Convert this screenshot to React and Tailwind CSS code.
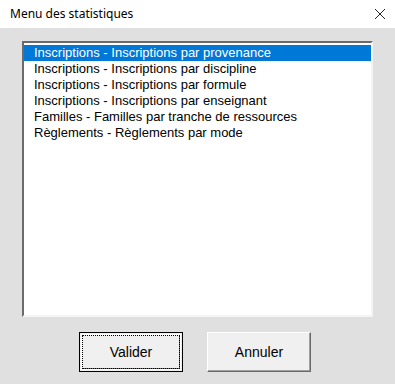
import React from 'react';

const items = [
  "Inscriptions - Inscriptions par provenance",
  "Inscriptions - Inscriptions par discipline",
  "Inscriptions - Inscriptions par formule",
  "Inscriptions - Inscriptions par enseignant",
  "Familles - Familles par tranche de ressources",
  "Règlements - Règlements par mode",
];

export default function App() {
  return (
    <div className="w-[395px] h-[384px] flex flex-col bg-[#e0e0e0] overflow-hidden">
      {/* Title bar */}
      <div className="h-[28px] bg-white flex items-center justify-between pl-[10px] pr-[8px]">
        <span className="text-[12px] text-black font-['Noto_Sans',sans-serif]">Menu des statistiques</span>
        <svg width="12" height="12" viewBox="0 0 12 12" className="mr-[1px]">
          <path d="M1 1 L11 11 M11 1 L1 11" stroke="#222" strokeWidth="1" fill="none" />
        </svg>
      </div>

      {/* Body */}
      <div className="flex flex-col items-center pt-[13px]">
        <div className="w-[351px] h-[276px] bg-white border-2 border-t-[#6b6b6b] border-l-[#6b6b6b] border-r-[#f4f4f4] border-b-[#f4f4f4] pt-[2px] font-['Liberation_Sans',Arial,sans-serif] text-[13px] text-black">
          {items.map((item, i) => (
            <div
              key={i}
              className={`h-[16px] leading-[16px] pl-[10px] whitespace-nowrap ${
                i === 0 ? 'bg-[#0078d7] text-white' : ''
              }`}
            >
              {item}
            </div>
          ))}
        </div>

        {/* Buttons */}
        <div className="flex gap-[24px] mt-[15px] mr-[5px] font-['Liberation_Sans',Arial,sans-serif] text-[14px] text-black">
          <button className="w-[104px] h-[40px] bg-[#f0f0f0] border border-black p-[1px]">
            <div className="w-full h-full border border-[#fff] shadow-[inset_-1px_-1px_0_#696969]">
              <div className="w-full h-full border border-dotted border-black flex items-center justify-center">
                Valider
              </div>
            </div>
          </button>
          <button className="w-[104px] h-[40px] bg-[#f0f0f0] border border-t-white border-l-white border-r-[#696969] border-b-[#696969] flex items-center justify-center shadow-[inset_-1px_-1px_0_#a0a0a0]">
            Annuler
          </button>
        </div>
      </div>
    </div>
  );
}
